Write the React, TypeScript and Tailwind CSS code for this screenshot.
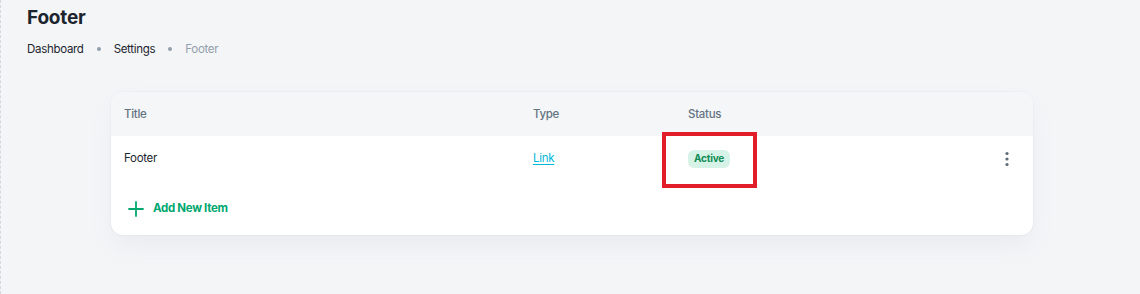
import { Plus } from "lucide-react";

const rows = [{ title: "Footer", type: "Link", status: "Active" }];

function Kebab() {
  return (
    <svg width="16" height="16" viewBox="0 0 16 16" className="text-[#5e6b78]">
      <circle cx="8" cy="2.5" r="1.6" fill="currentColor" />
      <circle cx="8" cy="8" r="1.6" fill="currentColor" />
      <circle cx="8" cy="13.5" r="1.6" fill="currentColor" />
    </svg>
  );
}

export default function App() {
  return (
    <div className="h-[294px] w-[1140px] overflow-hidden border-l border-dashed border-[#d5d9de] bg-[#f4f5f7] font-['Inter',sans-serif] text-[#212b36]">
      <div className="pl-[26px] pt-[5px]">
        <h1 className="text-[19px] font-bold leading-[26px] tracking-[-0.2px] text-[#1c252e]">Footer</h1>
        <nav className="mt-[9px] flex items-center text-[11.5px] leading-[18px] tracking-[-0.3px]">
          <span className="text-[#1c252e]">Dashboard</span>
          <span className="mx-[13px] h-1 w-1 rounded-full bg-[#919eab]" />
          <span className="text-[#1c252e]">Settings</span>
          <span className="mx-[13px] h-1 w-1 rounded-full bg-[#919eab]" />
          <span className="text-[#919eab]">Footer</span>
        </nav>
      </div>

      <div className="ml-[110px] mt-[34px] w-[922px] overflow-hidden rounded-[12px] bg-white shadow-[0_0_2px_0_rgba(145,158,171,0.2),0_12px_24px_-4px_rgba(145,158,171,0.12)]">
        <div className="grid h-[44px] grid-cols-[422px_155px_1fr_60px] items-center bg-[#f4f6f8] pt-[2px] text-[11.5px] font-medium tracking-[-0.3px] text-[#637381]">
          <div className="pl-[13px]">Title</div>
          <div>Type</div>
          <div>Status</div>
          <div />
        </div>
        {rows.map((r) => (
          <div key={r.title} className="grid h-[44px] grid-cols-[422px_155px_1fr_60px] items-center pt-[1px] text-[11.5px] tracking-[-0.3px]">
            <div className="pl-[13px] text-[#1c252e]">{r.title}</div>
            <div>
              <a className="text-[#00b8d9] underline underline-offset-2">{r.type}</a>
            </div>
            <div className="relative">
              <span className="inline-flex h-[18px] items-center rounded-[6px] bg-[#d7f2e6] px-[6px] text-[10px] font-bold tracking-[-0.2px] text-[#118d57]">
                {r.status}
              </span>
              <div className="pointer-events-none absolute left-[-26px] top-[-18px] h-[56px] w-[95px] border-[4px] border-[#e11d2a]" />
            </div>
            <div className="flex justify-start pl-[26px]">
              <Kebab />
            </div>
          </div>
        ))}
        <div className="flex h-[55px] items-center gap-[5px] pl-[13px] pt-[3px] text-[11.5px] font-bold tracking-[-0.3px] text-[#00a76f]">
          <Plus size={24} strokeWidth={1.8} />
          <span>Add New Item</span>
        </div>
      </div>
    </div>
  );
}
